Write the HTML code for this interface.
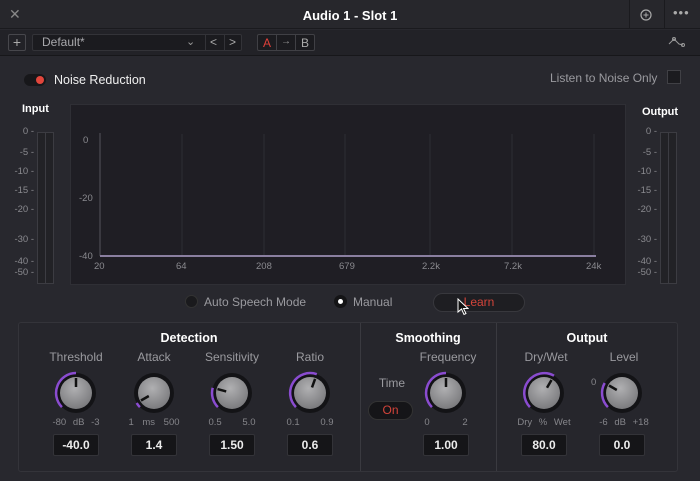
<!DOCTYPE html>
<html><head><meta charset="utf-8"><style>
*{margin:0;padding:0;box-sizing:border-box}
body{width:700px;height:481px;background:#28282e;font-family:"Liberation Sans",sans-serif;color:#aaa;position:relative;overflow:hidden;font-size:12px}
.a{position:absolute}
.w{color:#fff;font-weight:bold}
.lbl{color:#9a9a9f;font-size:12px;text-align:center}
.sc{font-size:9.5px;color:#8a8a8f;text-align:right;width:24px}
.val{position:absolute;width:46px;height:22px;background:#151518;border:1px solid #333338;border-radius:2px;color:#ececec;font-weight:bold;font-size:12px;text-align:center;line-height:20px}
.tk{font-size:9.5px;color:#85858a}
</style></head><body>
<div class="a" style="left:0;top:0;width:700px;height:29px;background:#27272c;border-bottom:1px solid #1a1a1e"></div>
<div class="a" style="left:9px;top:6px;color:#888;font-size:14px">✕</div>
<div class="a w" style="left:0;width:700px;top:8px;text-align:center;font-size:13px">Audio 1 - Slot 1</div>
<div class="a" style="left:629px;top:0;width:1px;height:29px;background:#1a1a1e"></div>
<div class="a" style="left:664px;top:0;width:1px;height:29px;background:#1a1a1e"></div>
<svg class="a" style="left:639px;top:8px" width="14" height="14" viewBox="0 0 14 14"><circle cx="7" cy="7" r="5" fill="none" stroke="#aaa" stroke-width="1.2"/><path d="M7 4.5v5M4.5 7h5" stroke="#aaa"/></svg>
<div class="a" style="left:673px;top:5px;color:#aaa;font-size:13px;letter-spacing:1px">•••</div>
<div class="a" style="left:0;top:30px;width:700px;height:26px;background:#222227;border-bottom:1px solid #17171a"></div>
<div class="a" style="left:8px;top:34px;width:18px;height:17px;border:1px solid #47474c;border-radius:2px;color:#aaa;text-align:center;line-height:15px;font-size:14px">+</div>
<div class="a" style="left:32px;top:34px;width:210px;height:17px;background:#1b1b1f;border:1px solid #333338;border-radius:2px"></div>
<div class="a" style="left:42px;top:35px;color:#a8a8ac;font-size:12px">Default*</div>
<div class="a" style="left:186px;top:35px;color:#999;font-size:11px">⌄</div>
<div class="a" style="left:205px;top:34px;width:1px;height:17px;background:#333338"></div>
<div class="a" style="left:224px;top:34px;width:1px;height:17px;background:#333338"></div>
<div class="a" style="left:210px;top:35px;color:#aaa;font-size:12px">&lt;</div>
<div class="a" style="left:229px;top:35px;color:#aaa;font-size:12px">&gt;</div>
<div class="a" style="left:257px;top:34px;width:58px;height:17px;border:1px solid #404045;border-radius:2px;background:#1b1b1f"></div>
<div class="a" style="left:276px;top:34px;width:1px;height:17px;background:#404045"></div>
<div class="a" style="left:295px;top:34px;width:1px;height:17px;background:#404045"></div>
<div class="a" style="left:263px;top:36px;color:#e0403a;font-size:12px">A</div>
<div class="a" style="left:281px;top:36px;color:#999;font-size:10px">→</div>
<div class="a" style="left:301px;top:36px;color:#aaa;font-size:12px">B</div>
<svg class="a" style="left:668px;top:36px" width="20" height="12"><path d="M1 8 L6 3 L11 8 L15 9" stroke="#999" fill="none"/><circle cx="6" cy="3" r="1.5" fill="none" stroke="#999"/><circle cx="15" cy="9" r="1.5" fill="none" stroke="#999"/></svg>
<div class="a" style="left:24px;top:74px;width:22px;height:12px;border-radius:6px;background:#17171a"></div>
<div class="a" style="left:36px;top:76px;width:8px;height:8px;border-radius:50%;background:#e2463c"></div>
<div class="a" style="left:54px;top:73px;color:#f0f0f0;font-size:12.5px">Noise Reduction</div>
<div class="a" style="left:550px;top:71px;color:#9a9a9f;font-size:12px">Listen to Noise Only</div>
<div class="a" style="left:667px;top:70px;width:14px;height:14px;background:#1b1b1f;border:1px solid #404045"></div>
<div class="a w" style="left:22px;top:103px;font-size:11px">Input</div>
<div class="a w" style="left:642px;top:106px;font-size:11px">Output</div>
<div class="a" style="left:37px;top:132px;width:9px;height:152px;border:1px solid #3c3c42;background:#222226"></div>
<div class="a" style="left:45px;top:132px;width:9px;height:152px;border:1px solid #3c3c42;background:#222226"></div>
<div class="a" style="left:660px;top:132px;width:9px;height:152px;border:1px solid #3c3c42;background:#222226"></div>
<div class="a" style="left:668px;top:132px;width:9px;height:152px;border:1px solid #3c3c42;background:#222226"></div>
<div class="a sc" style="left:10px;top:127px;line-height:10px">0 -</div>
<div class="a sc" style="left:10px;top:147px">-5 -</div>
<div class="a sc" style="left:10px;top:166px">-10 -</div>
<div class="a sc" style="left:10px;top:185px">-15 -</div>
<div class="a sc" style="left:10px;top:204px">-20 -</div>
<div class="a sc" style="left:10px;top:234px">-30 -</div>
<div class="a sc" style="left:10px;top:256px">-40 -</div>
<div class="a sc" style="left:10px;top:267px">-50 -</div>
<div class="a sc" style="left:633px;top:127px;line-height:10px">0 -</div>
<div class="a sc" style="left:633px;top:147px">-5 -</div>
<div class="a sc" style="left:633px;top:166px">-10 -</div>
<div class="a sc" style="left:633px;top:185px">-15 -</div>
<div class="a sc" style="left:633px;top:204px">-20 -</div>
<div class="a sc" style="left:633px;top:234px">-30 -</div>
<div class="a sc" style="left:633px;top:256px">-40 -</div>
<div class="a sc" style="left:633px;top:267px">-50 -</div>
<div class="a" style="left:70px;top:104px;width:556px;height:181px;background:#1f1e24;border:1px solid #2f2f35"></div>
<svg class="a" style="left:70px;top:104px" width="556" height="181">
<g stroke="#2e2d33" stroke-width="1"><path d="M112 30V152M194 30V152M275 30V152M360 30V152M442 30V152M524 30V152"/></g>
<path d="M30 29V152" stroke="#55545c"/>
<path d="M30 152H526" stroke="#8a7fa0" stroke-width="2"/>
<g fill="#8a8a8f" font-family="Liberation Sans" font-size="9.5"><text x="13" y="39">0</text><text x="9" y="97">-20</text><text x="9" y="155">-40</text>
<text x="24" y="165">20</text><text x="106" y="165">64</text><text x="186" y="165">208</text><text x="269" y="165">679</text><text x="352" y="165">2.2k</text><text x="434" y="165">7.2k</text><text x="516" y="165">24k</text></g>
</svg>
<div class="a" style="left:185px;top:295px;width:13px;height:13px;border-radius:50%;background:#1a1a1d;border:1px solid #333"></div>
<div class="a" style="left:204px;top:295px;color:#9a9a9f;font-size:12px">Auto Speech Mode</div>
<div class="a" style="left:334px;top:295px;width:13px;height:13px;border-radius:50%;background:#141416"></div>
<div class="a" style="left:338px;top:299px;width:5px;height:5px;border-radius:50%;background:#fff"></div>
<div class="a" style="left:353px;top:295px;color:#9a9a9f;font-size:12px">Manual</div>
<div class="a" style="left:433px;top:293px;width:92px;height:19px;border-radius:10px;background:#1e1e22;border:1px solid #38383d;color:#d2443a;text-align:center;line-height:17px;font-size:12px">Learn</div>
<div class="a" style="left:18px;top:322px;width:660px;height:150px;background:#26262c;border:1px solid #34343a;border-radius:3px"></div>
<div class="a" style="left:360px;top:323px;width:1px;height:148px;background:#3a3a40"></div>
<div class="a" style="left:496px;top:323px;width:1px;height:148px;background:#3a3a40"></div>
<div class="a w" style="left:18px;width:342px;top:331px;text-align:center;font-size:12.5px">Detection</div>
<div class="a w" style="left:360px;width:136px;top:331px;text-align:center;font-size:12.5px">Smoothing</div>
<div class="a w" style="left:496px;width:182px;top:331px;text-align:center;font-size:12.5px">Output</div>
<div class="a lbl" style="left:36px;width:80px;top:350px">Threshold</div>
<div class="a lbl" style="left:114px;width:80px;top:350px">Attack</div>
<div class="a lbl" style="left:192px;width:80px;top:350px">Sensitivity</div>
<div class="a lbl" style="left:270px;width:80px;top:350px">Ratio</div>
<div class="a lbl" style="left:408px;width:80px;top:350px">Frequency</div>
<div class="a lbl" style="left:506px;width:80px;top:350px">Dry/Wet</div>
<div class="a lbl" style="left:584px;width:80px;top:350px">Level</div>
<div class="a lbl" style="left:370px;width:44px;top:376px">Time</div>
<div class="a" style="left:368px;top:401px;width:45px;height:19px;border-radius:10px;background:#151518;border:1px solid #333;color:#d2443a;text-align:center;line-height:17px;font-size:12px">On</div>
<svg class="a" style="left:0;top:0" width="700" height="481">
<defs><radialGradient id="g" cx="0.45" cy="0.35" r="0.7"><stop offset="0" stop-color="#b0b0b2"/><stop offset="1" stop-color="#77777a"/></radialGradient></defs>
<g transform="translate(76,393)"><circle r="20" fill="#131316"/><path d="M-14.1 14.1A20 20 0 0 1 0 -20" stroke="#8a4cd0" stroke-width="2.5" fill="none"/><circle r="16" fill="url(#g)"/><path d="M0 -6V-15" stroke="#111" stroke-width="2.5"/></g>
<g transform="translate(154,393)"><circle r="20" fill="#131316"/><path d="M-14.1 14.1A20 20 0 0 1 -17.3 10" stroke="#8a4cd0" stroke-width="2.5" fill="none"/><circle r="16" fill="url(#g)"/><path d="M-5.2 3L-13 7.5" stroke="#111" stroke-width="2.5"/></g>
<g transform="translate(232,393)"><circle r="20" fill="#131316"/><path d="M-14.1 14.1A20 20 0 0 1 -19.3 -5.2" stroke="#8a4cd0" stroke-width="2.5" fill="none"/><circle r="16" fill="url(#g)"/><path d="M-5.8 -1.6L-14.5 -3.9" stroke="#111" stroke-width="2.5"/></g>
<g transform="translate(310,393)"><circle r="20" fill="#131316"/><path d="M-14.1 14.1A20 20 0 0 1 6.8 -18.8" stroke="#8a4cd0" stroke-width="2.5" fill="none"/><circle r="16" fill="url(#g)"/><path d="M2 -5.6L5.1 -14.1" stroke="#111" stroke-width="2.5"/></g>
<g transform="translate(446,393)"><circle r="20" fill="#131316"/><path d="M-14.1 14.1A20 20 0 0 1 0 -20" stroke="#8a4cd0" stroke-width="2.5" fill="none"/><circle r="16" fill="url(#g)"/><path d="M0 -6V-15" stroke="#111" stroke-width="2.5"/></g>
<g transform="translate(544,393)"><circle r="20" fill="#131316"/><path d="M-14.1 14.1A20 20 0 0 1 10 -17.3" stroke="#8a4cd0" stroke-width="2.5" fill="none"/><circle r="16" fill="url(#g)"/><path d="M3 -5.2L7.5 -13" stroke="#111" stroke-width="2.5"/></g>
<g transform="translate(622,393)"><circle r="20" fill="#131316"/><path d="M-14.1 14.1A20 20 0 0 1 -17.3 -10" stroke="#8a4cd0" stroke-width="2.5" fill="none"/><circle r="16" fill="url(#g)"/><path d="M-5.2 -3L-13 -7.5" stroke="#111" stroke-width="2.5"/></g>
</svg>
<div class="a tk" style="left:48px;top:417px;width:56px;text-align:center;word-spacing:4px">-80 dB -3</div>
<div class="a tk" style="left:126px;top:417px;width:56px;text-align:center;word-spacing:6px">1 ms 500</div>
<div class="a tk" style="left:204px;top:417px;width:56px;text-align:center;word-spacing:18px">0.5 5.0</div>
<div class="a tk" style="left:282px;top:417px;width:56px;text-align:center;word-spacing:18px">0.1 0.9</div>
<div class="a tk" style="left:423px;top:417px;width:46px;text-align:center;word-spacing:30px">0 2</div>
<div class="a tk" style="left:516px;top:417px;width:56px;text-align:center;word-spacing:4px">Dry % Wet</div>
<div class="a tk" style="left:596px;top:417px;width:56px;text-align:center;word-spacing:4px">-6 dB +18</div>
<div class="a tk" style="left:591px;top:377px">0</div>
<div class="val" style="left:53px;top:434px">-40.0</div>
<div class="val" style="left:131px;top:434px">1.4</div>
<div class="val" style="left:209px;top:434px">1.50</div>
<div class="val" style="left:287px;top:434px">0.6</div>
<div class="val" style="left:423px;top:434px">1.00</div>
<div class="val" style="left:521px;top:434px">80.0</div>
<div class="val" style="left:599px;top:434px">0.0</div>
<svg class="a" style="left:457px;top:298px" width="12" height="18"><path d="M1 1V14L4.5 11L7 16.5L9 15.5L6.5 10.5H11Z" fill="#111" stroke="#fff" stroke-width="1"/></svg>
</body></html>
